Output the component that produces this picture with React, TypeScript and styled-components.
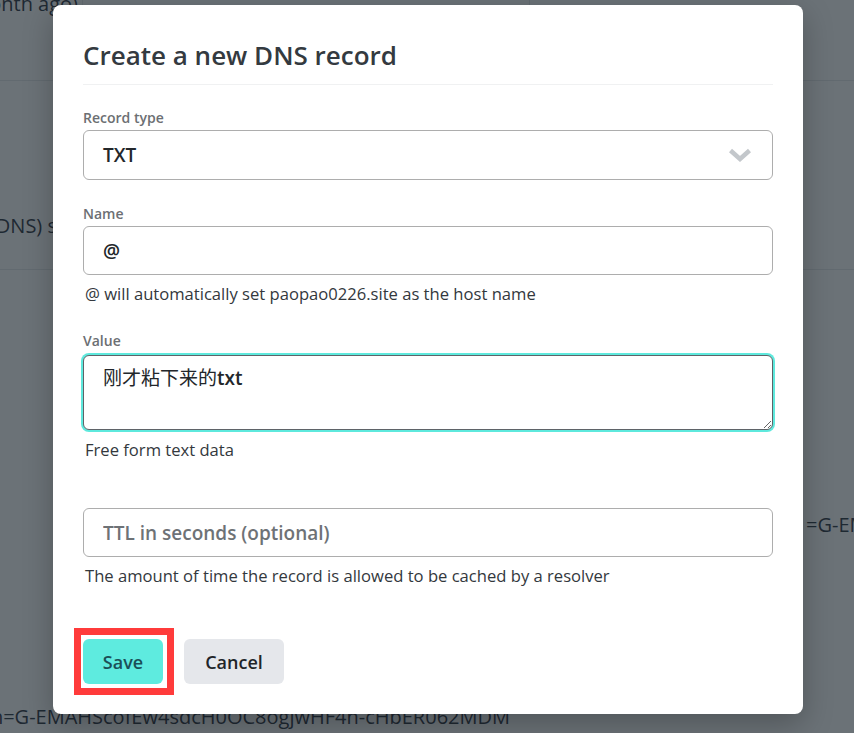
import React from "react";
import styled, { createGlobalStyle } from "styled-components";

const GlobalStyle = createGlobalStyle`
  html, body { margin: 0; padding: 0; }
  body {
    font-family: "Open Sans", "Noto Sans", "Noto Sans CJK SC", sans-serif;
    background: #fff;
  }
  *, *::before, *::after { box-sizing: border-box; }
`;

const Screen = styled.div`
  position: relative;
  width: 854px;
  height: 733px;
  overflow: hidden;
  background: #fff;
  color: #1f2937;
`;

/* ---------- background page (behind the dialog) ---------- */
const BgPage = styled.div`
  margin-top: -13px;
  font-size: 20px;
  line-height: 24px;
`;

const BgRow = styled.div<{ $h: number; $padTop?: number }>`
  height: ${(p) => p.$h}px;
  padding-top: ${(p) => p.$padTop ?? 0}px;
  border-bottom: 1px solid #e5e7eb;
`;

const BgTopRow = styled(BgRow)`
  display: grid;
  grid-template-columns: 82px 447px 32px 1fr;
`;

const BgCell = styled.div<{ $ruled?: boolean }>`
  border-left: ${(p) => (p.$ruled ? "1px solid #e5e7eb" : "none")};
`;

const ClipLine = styled.div<{ $w: number }>`
  width: ${(p) => p.$w}px;
  display: flex;
  justify-content: flex-end;
  white-space: nowrap;
  overflow: hidden;
`;

const BgBody = styled(BgRow)`
  border-bottom: none;
  display: flex;
  flex-direction: column;
  gap: 168px;
`;

const RightLine = styled.div`
  padding-left: 806px;
  white-space: nowrap;
  overflow: hidden;
`;

/* ---------- dialog ---------- */
const Overlay = styled.div`
  position: absolute;
  inset: 0;
  background: rgba(31, 41, 48, 0.66);
  display: flex;
  justify-content: center;
  align-items: flex-start;
  padding: 5px 0 0 2px;
`;

const Modal = styled.div`
  width: 750px;
  height: 709px;
  background: #fff;
  border-radius: 8px;
  box-shadow: 0 10px 30px rgba(0, 0, 0, 0.25);
  padding: 0 30px 30px;
  display: flex;
  flex-direction: column;
`;

const Header = styled.div`
  padding: 34px 0 13px;
  border-bottom: 1px solid #f0f1f2;
`;

const Title = styled.h2`
  margin: 0;
  font-size: 26px;
  line-height: 32px;
  font-weight: 600;
  color: #343a40;
`;

const Field = styled.div<{ $gap?: number }>`
  margin-top: ${(p) => p.$gap ?? 24}px;
  display: flex;
  flex-direction: column;
`;

const Label = styled.label`
  display: block;
  min-height: 19px;
  padding-top: 1px;
  font-size: 14px;
  line-height: 18px;
  font-weight: 600;
  color: #6c6f73;
  margin-bottom: 3px;
`;

const controlBase = `
  width: 100%;
  border: 1px solid #adadad;
  border-radius: 6px;
  background: #fff;
  font-family: "Open Sans", "Noto Sans", "Noto Sans CJK SC", sans-serif;
  font-size: 19px;
  font-weight: 600;
  color: #23272b;
`;

const SelectBox = styled.div`
  ${controlBase}
  height: 50px;
  padding: 0 20px 0 19px;
  display: flex;
  align-items: center;
  justify-content: space-between;
`;

const Input = styled.input`
  ${controlBase}
  height: 49px;
  padding: 0 19px;
  outline: none;
  &::placeholder {
    color: #6e7276;
    font-weight: 600;
  }
`;

const ValueBox = styled.div`
  ${controlBase}
  height: 75px;
  margin: 2px 0 1px;
  padding: 9px 19px;
  border-color: #5f6368;
  box-shadow: 0 0 0 2px #5ee9dd;
  outline: none;
  resize: vertical;
  overflow: auto;
  line-height: 26px;
  font-weight: 400;
`;

const Strong = styled.span`
  font-weight: 600;
`;

const Help = styled.div`
  margin-top: 7px;
  padding-left: 2px;
  font-size: 16.6px;
  line-height: 24px;
  color: #33383d;
`;

const Footer = styled.div`
  margin-top: auto;
  display: flex;
  gap: 21px;
`;

const Highlight = styled.div`
  position: relative;
  display: flex;
  &::after {
    content: "";
    position: absolute;
    top: -11px;
    bottom: -11px;
    left: -9px;
    right: -11px;
    border: 7px solid #ff3b3b;
    pointer-events: none;
  }
`;

const Button = styled.button<{ $primary?: boolean }>`
  height: 45px;
  border: none;
  border-radius: 6px;
  padding: 0 ${(p) => (p.$primary ? 19 : 20)}px;
  min-width: ${(p) => (p.$primary ? 80 : 100)}px;
  font-family: "Open Sans", "Noto Sans", sans-serif;
  font-size: 18px;
  font-weight: 600;
  background: ${(p) => (p.$primary ? "#5eebdf" : "#e5e7eb")};
  color: ${(p) => (p.$primary ? "#1b4f57" : "#212529")};
  cursor: pointer;
`;

const Chevron = () => (
  <svg width="24" height="14" viewBox="0 0 24 14" aria-hidden="true">
    <path d="M2.5 2.5 L12 11 L21.5 2.5" fill="none" stroke="#c3c7cb" strokeWidth="4.5" />
  </svg>
);

export default function App() {
  return (
    <Screen>
      <GlobalStyle />
      <BgPage>
        <BgTopRow $h={94} $padTop={5}>
          <BgCell>
            <ClipLine $w={78}>Updated (1 month ago)</ClipLine>
          </BgCell>
          <BgCell $ruled />
          <BgCell $ruled />
          <BgCell />
        </BgTopRow>
        <BgRow $h={189} $padTop={133}>
          <ClipLine $w={57}>Domain Name System (DNS) s</ClipLine>
        </BgRow>
        <BgBody $h={480} $padTop={243}>
          <RightLine>=G-EMAHScofEw4sdcH0OC8ogjwHF4n-cHbER062MDM</RightLine>
          <ClipLine $w={510}>
            google-site-verification=G-EMAHScofEw4sdcH0OC8ogjwHF4n-cHbER062MDM
          </ClipLine>
        </BgBody>
      </BgPage>

      <Overlay>
        <Modal role="dialog" aria-modal="true">
          <Header>
            <Title>Create a new DNS record</Title>
          </Header>

          <Field $gap={23}>
            <Label>Record type</Label>
            <SelectBox>
              <span>TXT</span>
              <Chevron />
            </SelectBox>
          </Field>

          <Field>
            <Label>Name</Label>
            <Input defaultValue="@" />
            <Help>@ will automatically set paopao0226.site as the host name</Help>
          </Field>

          <Field $gap={25}>
            <Label>Value</Label>
            <ValueBox role="textbox" aria-multiline="true" contentEditable suppressContentEditableWarning>
              刚才粘下来的<Strong>txt</Strong>
            </ValueBox>
            <Help>Free form text data</Help>
          </Field>

          <Field $gap={24}>
            <Label />
            <Input placeholder="TTL in seconds (optional)" />
            <Help>The amount of time the record is allowed to be cached by a resolver</Help>
          </Field>

          <Footer>
            <Highlight>
              <Button $primary>Save</Button>
            </Highlight>
            <Button>Cancel</Button>
          </Footer>
        </Modal>
      </Overlay>
    </Screen>
  );
}
